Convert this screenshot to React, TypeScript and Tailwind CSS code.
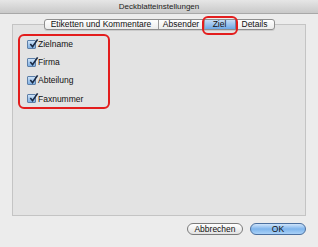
import React from "react";

const Check = () => (
  <span className="w-[9px] h-[9px] rounded-[1px] border border-[#5d7fa8] bg-gradient-to-b from-[#cfe3f7] to-[#7fb0e3] relative flex-none">
    <svg viewBox="0 0 12 12" className="absolute -top-[3px] left-0 w-[11px] h-[11px]">
      <path d="M2.5 6.5 L5 9.5 L10.5 1.5" fill="none" stroke="#1a2a44" strokeWidth="1.8" />
    </svg>
  </span>
);

export default function App() {
  const items = ["Zielname", "Firma", "Abteilung", "Faxnummer"];
  return (
    <div
      className="w-[318px] h-[247px] bg-[#ececec] flex flex-col overflow-hidden text-[#111] whitespace-nowrap"
      style={{ fontFamily: '"Liberation Sans", Arial, sans-serif' }}
    >
      <div className="h-[14px] flex-none bg-gradient-to-b from-[#e6e6e6] to-[#c9c9c9] border-b border-[#a8a8a8] flex items-center justify-center text-[8px] text-[#222]">
        Deckblatteinstellungen
      </div>
      <div className="flex flex-col px-[12px] pt-[5px]">
        <div className="flex justify-center relative z-10 -mb-[6px]">
          <div className="flex h-[11px] text-[8.5px] leading-none border border-[#8e8e8e] rounded-[3px] bg-gradient-to-b from-white to-[#ececec] shadow-[0_1px_0_rgba(0,0,0,0.1)]">
            <div className="w-[114px] flex items-center justify-center border-r border-[#9a9a9a]">Etiketten und Kommentare</div>
            <div className="w-[46px] flex items-center justify-center border-r border-[#9a9a9a]">Absender</div>
            <div className="relative w-[31px] flex items-center justify-center bg-gradient-to-b from-[#c6ddf5] to-[#6ea8e6] border-r border-[#6a86a8]">
              Ziel
              <span className="absolute -left-[3px] -right-[3px] -top-[4px] -bottom-[6px] border-2 border-[#e31d1d] rounded-[6px]" />
            </div>
            <div className="w-[38px] flex items-center justify-center">Details</div>
          </div>
        </div>
        <div className="h-[192px] bg-[#e3e3e3] border border-[#c4c4c4] pt-[9px] pl-[5px]">
          <div className="w-[92px] h-[75px] border-2 border-[#e31d1d] rounded-[6px] flex flex-col justify-between py-[2px] pl-[7px] text-[8.5px]">
            {items.map((t) => (
              <div key={t} className="flex items-center gap-[2px] h-[12px]">
                <Check />
                <span>{t}</span>
              </div>
            ))}
          </div>
        </div>
        <div className="flex justify-end gap-[7px] mt-[7px]">
          <div className="w-[56px] h-[12px] rounded-full border border-[#7a7a7a] bg-gradient-to-b from-white to-[#e2e2e2] flex items-center justify-center text-[8.5px]">
            Abbrechen
          </div>
          <div className="w-[56px] h-[12px] rounded-full border border-[#4b6f9e] bg-gradient-to-b from-[#cfe4fa] via-[#7fb5ec] to-[#a9d1f7] flex items-center justify-center text-[8.5px]">
            OK
          </div>
        </div>
      </div>
    </div>
  );
}
